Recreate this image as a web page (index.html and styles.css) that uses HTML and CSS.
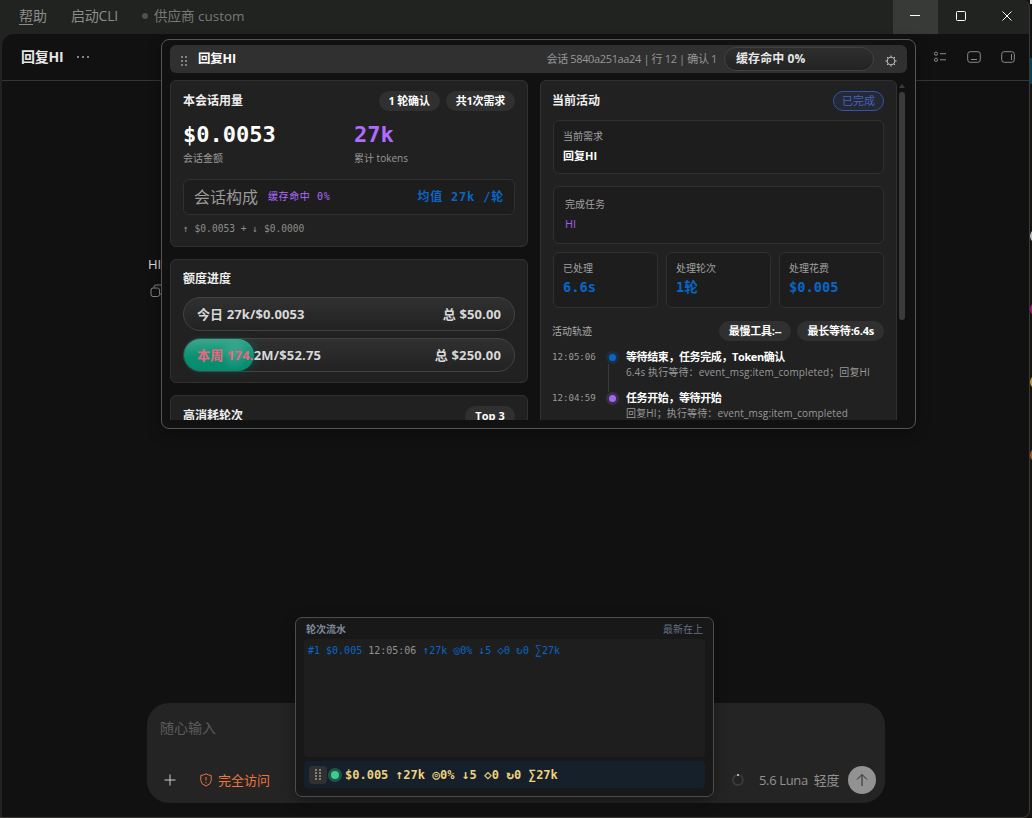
FILE: index.html
```html
<!DOCTYPE html>
<html lang="zh-CN">
<head>
    <meta charset="UTF-8">
    <meta name="viewport" content="width=device-width, initial-scale=1.0">
    <title>回复HI</title>
    <link rel="stylesheet" href="styles.css">
</head>
<body>

<div class="window">
    <header class="menubar">
        <span class="menu"><u>帮</u>助</span>
        <span class="menu launch">启动CLI</span>
        <span class="provider"><i></i>供应商 custom</span>
        <div class="controls">
            <button class="active"><svg width="12" height="12"><path d="M1 5.5h10"/></svg></button>
            <button><svg width="12" height="12"><rect x="1.5" y="1.5" width="9" height="9" rx="1"/></svg></button>
            <button><svg width="12" height="12"><path d="M1.5 1.5l9 9M10.5 1.5l-9 9"/></svg></button>
        </div>
    </header>

    <main class="app">
        <div class="topbar">
            <h1>回复HI</h1>
            <span class="more"><i></i><i></i><i></i></span>
            <div class="tools">
                <svg width="14" height="12" viewBox="0 0 14 12"><circle cx="3" cy="2.7" r="1.6"/><circle cx="3" cy="8.8" r="1.6"/><path d="M7 2.7h6M7 8.8h6"/></svg>
                <svg width="14" height="12" viewBox="0 0 14 12"><rect x=".7" y=".7" width="12.6" height="10.6" rx="2.5"/><path d="M4 8.5h6"/></svg>
                <svg width="14" height="12" viewBox="0 0 14 12"><rect x=".7" y=".7" width="12.6" height="10.6" rx="2.5"/><path d="M10.5 3v6"/></svg>
            </div>
        </div>

        <div class="thread">
            <div class="message">HI</div>
            <svg class="copy" width="14" height="14" viewBox="0 0 14 14"><rect x="1" y="4" width="8.5" height="8.5" rx="2"/><path d="M4 3.5V3q0-2 2-2h5q2 0 2 2v5q0 2-2 2h-1"/></svg>
        </div>

        <div class="composer">
            <p>随心输入</p>
            <div class="composer-row">
                <svg class="plus" width="12" height="12"><path d="M6 .5v11M.5 6h11"/></svg>
                <svg class="shield" width="12" height="14" viewBox="0 0 12 14"><path d="M6 .8Q8.2 2.3 11.2 2.4V7.5Q11.2 11 6 13.1Q.8 11 .8 7.5V2.4Q3.8 2.3 6 .8ZM6 4v3.6M6 9v1.3"/></svg>
                <span class="access">完全访问</span>
                <svg class="ring" width="12" height="12"><circle cx="6" cy="6" r="5"/><path d="M5 1h2"/></svg>
                <span class="model">5.6 Luna&nbsp; 轻度</span>
                <button class="send"><svg width="14" height="14"><path d="M7 13V1.5M2 6.5l5-5 5 5"/></svg></button>
            </div>
        </div>
    </main>
</div>

<aside class="desktop">
    <i class="white"></i><i class="pink"></i><i class="yellow"></i><i class="orange"></i>
</aside>

<section class="dashboard">
    <header class="dash-head">
        <span class="grip"><i></i><i></i><i></i><i></i><i></i><i></i></span>
        <h2>回复HI</h2>
        <span class="session">会话 5840a251aa24 | 行 12 | 确认 1</span>
        <span class="cache">缓存命中 0%</span>
        <svg class="gear" width="12" height="12" viewBox="0 0 12 12"><circle cx="6" cy="6" r="3.9"/><path d="M6 .4v2M6 9.6v2M.4 6h2M9.6 6h2M2 2l1.4 1.4M8.6 8.6L10 10M2 10l1.4-1.4M8.6 3.4L10 2"/></svg>
    </header>

    <div class="dash-body">
        <div class="column">
            <div class="card usage">
                <div class="card-head">
                    <h3>本会话用量</h3>
                    <span class="pill">1 轮确认</span>
                    <span class="pill">共1次需求</span>
                </div>
                <div class="totals">
                    <div><b>$0.0053</b><span>会话金额</span></div>
                    <div class="tokens"><b>27k</b><span>累计 tokens</span></div>
                </div>
                <div class="compose">
                    <span class="label">会话构成</span>
                    <span class="hit">缓存命中 0%</span>
                    <span class="average">均值 27k /轮</span>
                </div>
                <p class="split"><i>↑</i> $0.0053 + <i>↓</i> $0.0000</p>
            </div>

            <div class="card quota">
                <h3>额度进度</h3>
                <div class="bar"><span>今日 27k/$0.0053</span><span>总 $50.00</span></div>
                <div class="bar week">
                    <div class="fill" style="width: 21.1%"></div>
                    <span><em>本周 174.</em>2M/$52.75</span><span>总 $250.00</span>
                </div>
            </div>

            <div class="card top">
                <div class="card-head">
                    <h3>高消耗轮次</h3>
                    <span class="pill">Top 3</span>
                </div>
            </div>
        </div>

        <div class="column">
            <div class="card activity">
                <div class="card-head">
                    <h3>当前活动</h3>
                    <span class="done">已完成</span>
                </div>
                <div class="box request"><span>当前需求</span><b>回复HI</b></div>
                <div class="box task"><span>完成任务</span><b>HI</b></div>
                <div class="stats">
                    <div class="box"><span>已处理</span><b>6.6s</b></div>
                    <div class="box"><span>处理轮次</span><b>1轮</b></div>
                    <div class="box"><span>处理花费</span><b>$0.005</b></div>
                </div>
                <div class="card-head trace">
                    <h4>活动轨迹</h4>
                    <span class="pill">最慢工具:--</span>
                    <span class="pill">最长等待:6.4s</span>
                </div>
                <div class="event">
                    <time>12:05:06</time>
                    <span class="dot"></span>
                    <div><b>等待结束，任务完成，Token确认</b><p>6.4s 执行等待：event_msg:item_completed；回复HI</p></div>
                </div>
                <div class="event start">
                    <time>12:04:59</time>
                    <span class="dot"></span>
                    <div><b>任务开始，等待开始</b><p>回复HI；执行等待：event_msg:item_completed</p></div>
                </div>
            </div>
        </div>

        <div class="scroll"><i class="up"></i><div class="thumb"></div><i class="down"></i></div>
    </div>
</section>

<section class="log">
    <header><b>轮次流水</b><span>最新在上</span></header>
    <div class="rows"><p>#1 $0.005 <span>12:05:06</span> <i>↑</i>27k <i>◎</i>0% <i>↓</i>5 <i>◇</i>0 <i>↻</i>0 <i>∑</i>27k</p></div>
    <div class="summary">
        <span class="grip"><i></i><i></i><i></i><i></i><i></i><i></i><i></i><i></i></span>
        <span class="live"></span>
        <b>$0.005 <i>↑</i>27k <i>◎</i>0% <i>↓</i>5 <i>◇</i>0 <i>↻</i>0 <i>∑</i>27k</b>
    </div>
</section>

</body>
</html>
```

FILE: styles.css
```css
* {
    box-sizing: border-box;
}
body {
    margin: 0;
    height: 818px;
    overflow: hidden;
    display: flex;
    background-color: #17130f;
    color: #e6e6e6;
    font-family: "Open Sans", "Noto Sans CJK SC", sans-serif;
    font-size: 12px;
}
h1, h2, h3, h4, p {
    margin: 0;
}
svg {
    display: block;
    fill: none;
    stroke: currentColor;
    flex: none;
}
button {
    border: none;
    padding: 0;
    color: inherit;
    background: none;
    display: flex;
    align-items: center;
    justify-content: center;
}

/* main window */
.window {
    width: 1030px;
    height: 818px;
    display: flex;
    flex-direction: column;
    background-color: #20231f;
    border-right: 1px solid #3a3a3a;
    border-bottom: 1px solid #3d3a3a;
    border-radius: 0 8px 8px 0;
    overflow: hidden;
}
.menubar {
    height: 34px;
    flex: none;
    display: flex;
    align-items: center;
    padding-left: 19px;
    color: #8b8d8b;
    font-size: 14px;
    line-height: 32px;
}
.menu {
    width: 52px;
    height: 34px;
    white-space: nowrap;
}
.menu u {
    text-underline-offset: 3px;
}
.launch {
    width: 71px;
    letter-spacing: -0.2px;
}
.provider {
    height: 34px;
    padding-bottom: 2px;
    display: flex;
    align-items: center;
    color: #777977;
    font-size: 13.5px;
}
.provider i {
    width: 6px;
    height: 6px;
    margin-right: 6px;
    border-radius: 50%;
    background-color: #4f514f;
}
.controls {
    display: flex;
    margin-left: auto;
    margin-right: -1px;
    color: #fff;
}
.controls button {
    width: 46px;
    height: 34px;
    padding-bottom: 2px;
}
.controls .active {
    width: 45px;
    padding-right: 1px;
    background-color: #383a38;
}
.app {
    flex: 1;
    display: flex;
    flex-direction: column;
    margin-left: 2px;
    background-color: #111;
    border-radius: 12px 0 0 0;
}
.topbar {
    height: 47px;
    display: flex;
    align-items: center;
    padding: 0 14px 0 19px;
    border-bottom: 1px solid #363636;
}
.topbar h1 {
    font-size: 14px;
    line-height: 20px;
    letter-spacing: -0.2px;
}
.more {
    display: flex;
    gap: 3px;
    margin-left: 13px;
}
.more i {
    width: 2px;
    height: 2px;
    border-radius: 50%;
    background-color: #aaa;
}
.tools {
    display: flex;
    gap: 20px;
    margin-left: auto;
    color: #8a8a8a;
}
.thread {
    flex: 1;
    padding: 173px 0 0 146px;
    color: #ddd;
}
.message {
    font-size: 13px;
    line-height: 20px;
}
.copy {
    margin: 10px 0 0 2px;
    color: #888;
}
.composer {
    width: 738px;
    height: 100px;
    margin: 0 0 14px 145px;
    padding: 14px 9px 8px 13px;
    display: flex;
    flex-direction: column;
    justify-content: space-between;
    background-color: #242424;
    border-radius: 22px;
    font-size: 14px;
    color: #5c5c5c;
}
.composer p {
    line-height: 22px;
}
.composer-row {
    display: flex;
    align-items: center;
    height: 30px;
}
.plus {
    margin: 0 24px 0 4px;
    color: #ccc;
}
.shield {
    margin-right: 6px;
}
.shield, .access {
    color: #f0743e;
}
.access {
    padding-bottom: 2px;
    font-size: 13px;
}
.ring {
    margin-left: auto;
    stroke-width: 2;
    color: #3a3a3a;
}
.ring path {
    stroke: #aaa;
}
.model {
    width: 80px;
    margin: 0 9px 0 15px;
    padding-bottom: 2px;
    white-space: nowrap;
    color: #929292;
    font-size: 13px;
    letter-spacing: -0.35px;
}
.send {
    width: 28px;
    height: 28px;
    border-radius: 50%;
    background-color: #929292;
    color: #2b2b2b;
}

/* edge of whatever sits behind the window */
.desktop {
    width: 2px;
    padding-top: 229px;
    background: linear-gradient(#ddd 4px, #111 4px 58px, #05415a 58px 84px, #17130f 84px);
    overflow: hidden;
}
.desktop i {
    display: block;
    width: 14px;
    height: 14px;
    margin-bottom: 59px;
    border-radius: 50%;
}
.white { background-color: #b8c0c4; }
.pink { background-color: #b1136a; }
.yellow { background-color: #bda13c; }
.orange { background-color: #9c6324; }

/* dashboard */
.dashboard {
    position: absolute;
    left: 161px;
    top: 39px;
    width: 755px;
    height: 390px;
    padding: 5px 8px 8px;
    background-color: #111;
    border: 1px solid #555;
    border-radius: 8px;
    box-shadow: 0 4px 14px rgba(0, 0, 0, 0.35);
}
.dash-head {
    height: 28px;
    display: flex;
    align-items: center;
    padding: 0 10px 0 11px;
    background-color: #303030;
    border-radius: 6px;
}
.grip {
    display: grid;
    grid-template-columns: 2px 2px;
    gap: 2px;
}
.grip i {
    width: 2px;
    height: 2px;
    background-color: #85827d;
}
.dash-head .grip {
    margin-top: 3px;
}
.dash-head h2 {
    margin-left: 11px;
    padding-bottom: 3px;
    font-size: 12.5px;
    color: #fff;
    letter-spacing: -0.2px;
}
.session {
    margin-left: auto;
    margin-right: 7px;
    padding-bottom: 3px;
    color: #969696;
    font-size: 11px;
    letter-spacing: -0.36px;
    white-space: nowrap;
}
.cache {
    width: 150px;
    height: 24px;
    padding-left: 11px;
    border: 1px solid #424242;
    border-radius: 12px;
    background: linear-gradient(#2e2e2e, #232323);
    font-weight: bold;
    line-height: 22px;
    letter-spacing: 0.1px;
}
.gear {
    margin: 3px 0 0 11px;
    color: #bbb;
}
.dash-body {
    height: 340px;
    margin-top: 7px;
    display: grid;
    grid-template-columns: 358px 357px 9px;
    column-gap: 12px;
    overflow: hidden;
}
.column {
    display: flex;
    flex-direction: column;
    gap: 12px;
}
.card {
    flex: none;
    padding: 10px 12px;
    background-color: #212121;
    border: 1px solid #313131;
    border-radius: 6px;
}
.card h3 {
    font-size: 12px;
    line-height: 20px;
    color: #eee;
}
.card-head {
    height: 20px;
    display: flex;
    gap: 6px;
}
.card-head h3, .card-head h4 {
    margin-right: auto;
}
.pill {
    height: 20px;
    padding: 0 10px;
    border-radius: 10px;
    background-color: #303030;
    color: #fff;
    font-size: 11px;
    font-weight: bold;
    line-height: 20px;
    letter-spacing: -0.2px;
    white-space: nowrap;
}
.top .pill {
    letter-spacing: 0.1px;
}
.usage {
    height: 167px;
}
.totals {
    display: grid;
    grid-template-columns: 1fr 1fr;
    gap: 10px;
    margin-top: 9px;
}
.totals b {
    display: block;
    font-family: "DejaVu Sans Mono", monospace;
    font-size: 22px;
    line-height: 30px;
    color: #fff;
}
.totals .tokens b {
    color: #b06bff;
}
.totals span {
    display: block;
    font-size: 10px;
    line-height: 17px;
    color: #999;
}
.compose {
    height: 36px;
    display: flex;
    align-items: center;
    margin-top: 12px;
    padding: 0 10px;
    border: 1px solid #303030;
    border-radius: 6px;
    background-color: #1d1d1d;
    font-family: "DejaVu Sans Mono", "Noto Sans CJK SC", monospace;
}
.compose .label {
    padding-bottom: 2px;
    font-size: 16px;
    color: #999;
}
.hit {
    margin-left: 10px;
    padding-bottom: 3px;
    font-size: 10px;
    letter-spacing: 0.6px;
    color: #b06bff;
}
.average {
    margin-left: auto;
    padding-bottom: 3px;
    font-size: 12px;
    font-weight: bold;
    letter-spacing: 0.8px;
    color: #0866c6;
}
.split {
    margin-top: 6px;
    font-family: "DejaVu Sans Mono", monospace;
    font-size: 9.6px;
    line-height: 16px;
    color: #8b8b8b;
}
/* arrows and counters sit a little larger than the digits */
.split i, .rows i, .summary b i {
    font-family: "DejaVu Sans Mono", monospace;
    font-style: normal;
    line-height: 1;
}
.quota {
    height: 124px;
    padding-top: 9px;
}
.bar {
    position: relative;
    height: 34px;
    margin-top: 8px;
    padding: 0 13px;
    display: flex;
    justify-content: space-between;
    border: 1px solid #424242;
    border-radius: 17px;
    background: linear-gradient(#303030, #222);
    font-weight: bold;
    font-size: 13px;
    line-height: 32px;
    letter-spacing: 0.12px;
    color: #d8d8d8;
    white-space: nowrap;
}
.week {
    margin-top: 7px;
    letter-spacing: 0.18px;
}
.bar span {
    position: relative;
}
.bar em {
    font-style: normal;
    color: #ee6580;
}
.fill {
    position: absolute;
    left: 0;
    top: 0;
    height: 32px;
    border-radius: 16px;
    background: radial-gradient(circle at 72% 50%, rgba(255, 255, 255, 0.16), transparent 15px), linear-gradient(#3aa68d, #069071 60%, #078b70);
    box-shadow: 3px 0 9px rgba(6, 143, 112, 0.25);
}
.top {
    height: 80px;
}
.activity {
    height: 500px;
    padding: 10px 12px 10px 11px;
}
.activity .box, .activity .stats {
    margin-left: 1px;
}
.activity .stats .box {
    margin-left: 0;
}
.done {
    height: 20px;
    padding: 0 8px;
    border: 1px solid #3553a7;
    border-radius: 10px;
    background-color: #242935;
    color: #4664bd;
    font-size: 11px;
    line-height: 18px;
}
.box {
    padding: 6px 9px;
    border: 1px solid #303030;
    border-radius: 6px;
    background-color: #1d1d1d;
}
.box span {
    display: block;
    font-size: 10px;
    line-height: 18px;
    color: #a0a0a0;
}
.box b {
    display: block;
    font-size: 11px;
    line-height: 21px;
    color: #fff;
}
.request {
    height: 54px;
    margin-top: 9px;
}
.task {
    height: 58px;
    margin-top: 12px;
    padding: 8px 11px;
}
.task b {
    font-weight: normal;
    color: #a05ee8;
}
.stats {
    display: grid;
    grid-template-columns: repeat(3, 1fr);
    gap: 8px;
    margin-top: 8px;
}
.stats .box {
    height: 56px;
}
.stats b {
    font-family: "DejaVu Sans Mono", "Noto Sans CJK SC", monospace;
    font-size: 13.7px;
    line-height: 20px;
    color: #0866c6;
}
.trace {
    margin-top: 13px;
}
.trace h4 {
    font-size: 10px;
    font-weight: normal;
    line-height: 20px;
    color: #aaa;
}
.event {
    height: 41px;
    display: grid;
    grid-template-columns: 55px 12px 1fr;
}
.trace + .event {
    margin-top: 8px;
}
.event time {
    font-family: "DejaVu Sans Mono", monospace;
    font-size: 9.1px;
    line-height: 16px;
    color: #999;
}
.dot {
    width: 7px;
    height: 7px;
    margin: 5px 0 0 2px;
    border-radius: 50%;
    background-color: #0866c6;
    box-shadow: 0 0 0 3px rgba(8, 102, 198, 0.2);
}
.trace + .event .dot {
    display: flow-root;
}
.trace + .event .dot::after {
    content: "";
    display: block;
    width: 1px;
    height: 28px;
    margin: 10px 0 0 -1px;
    background-color: #3a3a3a;
}
.start .dot {
    background-color: #a566f4;
    box-shadow: 0 0 0 3px rgba(165, 102, 244, 0.2);
}
.event div {
    padding-left: 7px;
    white-space: nowrap;
}
.event b {
    display: block;
    font-size: 11px;
    line-height: 16px;
    letter-spacing: -0.4px;
    color: #fff;
}
.event p {
    font-size: 10px;
    line-height: 15px;
    letter-spacing: 0.13px;
    color: #999;
}
.scroll {
    width: 9px;
    display: flex;
    flex-direction: column;
    align-items: center;
    margin-left: -12px;
    padding: 4px 0 3px;
}
.thumb {
    width: 6px;
    height: 228px;
    margin: 4px 0 auto;
    border-radius: 3px;
    background-color: #3b3b3b;
}
.scroll i {
    border: 3px solid transparent;
}
.scroll .up {
    border-top: 0;
    border-bottom: 4px solid #3b3b3b;
}
.scroll .down {
    border-bottom: 0;
    border-top: 4px solid #3b3b3b;
}

/* turn log */
.log {
    position: absolute;
    left: 295px;
    top: 617px;
    width: 419px;
    height: 180px;
    padding: 3px 8px 8px;
    background-color: #181818;
    border: 1px solid #4d4d4d;
    border-radius: 7px;
    box-shadow: 0 4px 14px rgba(0, 0, 0, 0.35);
}
.log header {
    height: 18px;
    display: flex;
    justify-content: space-between;
    padding: 0 2px;
    color: #627085;
    font-size: 10px;
    line-height: 17px;
}
.log header b {
    color: #7d8998;
}
.rows {
    height: 118px;
    padding: 4px;
    border-radius: 4px;
    background-color: #1e1e1e;
    font-family: "DejaVu Sans Mono", monospace;
    font-size: 10px;
    line-height: 15px;
    color: #0866c6;
}
.rows span {
    color: #929292;
}
.rows i {
    font-size: 11.4px;
}
.summary {
    height: 27px;
    display: flex;
    align-items: center;
    margin-top: 4px;
    padding-left: 5px;
    border-radius: 4px;
    background-color: #16202a;
    font-family: "DejaVu Sans Mono", monospace;
    color: #eed27c;
}
.summary b {
    padding-top: 1px;
}
.summary b i {
    font-size: 12.9px;
}
.summary .grip {
    width: 18px;
    height: 18px;
    gap: 1px 2px;
    place-content: center;
    border-radius: 4px;
    background-color: #303030;
}
.live {
    width: 14px;
    height: 14px;
    margin: 0 3px 0 1px;
    border: 3px solid #20564a;
    border-radius: 50%;
    background-color: #3dce8b;
}
```
